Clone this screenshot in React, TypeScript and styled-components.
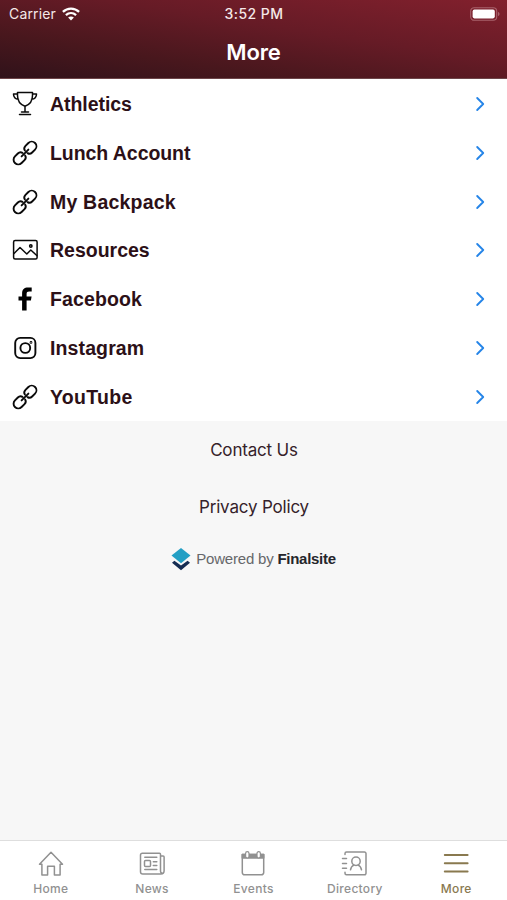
import React from "react";
import styled, { createGlobalStyle } from "styled-components";

const GlobalStyle = createGlobalStyle`
  * { box-sizing: border-box; }
  body { margin: 0; background: #f7f7f7; }
  svg { display: block; flex: none; }
`;

const Screen = styled.div`
  display: flex;
  flex-direction: column;
  width: 507px;
  height: 900px;
  background: #f7f7f7;
  font-family: Inter, sans-serif;
  overflow: hidden;
`;

const Header = styled.header`
  height: 79px;
  flex: none;
  background: linear-gradient(to top right, #30121a 0%, #48171d 28%, #661b26 60%, #82202d 100%);
  border-bottom: 1px solid #6d4549;
  color: #fff;
`;

const StatusBar = styled.div`
  display: grid;
  grid-template-columns: 1fr auto 1fr;
  align-items: center;
  height: 27px;
  padding: 0 7px 0 9px;
  color: #f5e8e8;
`;

const Carrier = styled.div`
  display: flex;
  align-items: center;
  gap: 6px;
  font-size: 14px;
  line-height: 27px;
  letter-spacing: 0.15px;
`;

const Clock = styled.div`
  font-size: 14px;
  font-weight: 500;
  letter-spacing: 0.45px;
  margin-left: -1px;
`;

const Battery = styled.div`
  justify-self: end;
`;

const Title = styled.h1`
  margin: 9px 0 0;
  font-size: 22px;
  line-height: 32px;
  font-weight: 600;
  letter-spacing: -0.1px;
  text-align: center;
`;

const Links = styled.nav`
  display: grid;
  grid-template-rows: repeat(7, 1fr);
  height: 342px;
  padding-top: 1px;
  flex: none;
  background: #fff;
`;

const LinkRow = styled.div`
  display: flex;
  align-items: center;
  padding: 0 20px 0 12px;
  color: #0a0a0a;
`;

const LinkLabel = styled.span<{ $track: number }>`
  flex: 1;
  margin-left: 12px;
  color: #2c1017;
  font: bold 19.5px/24px "Liberation Sans", Arial, sans-serif;
  letter-spacing: ${(p) => p.$track}px;
`;

const Body = styled.main`
  flex: 1;
  display: flex;
  flex-direction: column;
  align-items: center;
  padding-top: 1px;
`;

const FooterLink = styled.span`
  height: 57px;
  font-size: 17px;
  line-height: 57px;
  letter-spacing: -0.18px;
  padding-left: 1px;
  color: #35222a;
`;

const Powered = styled.div`
  display: flex;
  align-items: center;
  height: 24px;
  margin-top: 11px;
  gap: 5px;
  color: #66676a;
  font: 15px/24px "Liberation Sans", Arial, sans-serif;
  letter-spacing: -0.2px;
`;

const Brand = styled.b`
  color: #25262b;
  letter-spacing: -0.28px;
`;

const TabBar = styled.nav`
  display: grid;
  grid-template-columns: repeat(5, 1fr);
  height: 60px;
  flex: none;
  background: #fff;
  border-top: 1px solid #dedede;
`;

const Tab = styled.div<{ $active?: boolean }>`
  display: flex;
  flex-direction: column;
  align-items: center;
  padding-top: 9px;
  color: ${(p) => (p.$active ? "#89794f" : "#919191")};
`;

const TabLabel = styled.span`
  margin-top: 4px;
  font-size: 12px;
  line-height: 16px;
  font-weight: 500;
  letter-spacing: 0.3px;
`;

const line = { fill: "none", stroke: "currentColor", strokeLinecap: "round", strokeLinejoin: "round" } as const;

const Trophy = () => (
  <svg width="26" height="26" viewBox="0 0 26 26" {...line} strokeWidth="1.5">
    <path d="M5.500 1.500h15v3c0 6-3 9.200-7.500 10.700C8.500 13.700 5.500 10.500 5.500 4.500zM5.500 3h-4c0 3.500 1.500 5 5 5.300M20.500 3h4c0 3.500-1.500 5-5 5.300M13 15.500v5M9.500 21h7M7.500 23.500h11" />
  </svg>
);

const Chain = () => (
  <svg width="26" height="26" viewBox="0 0 26 26" {...line} strokeWidth="1.900">
    <g transform="rotate(-45 13 13)">
      <path d="M11.300 11.100C10.900 9.200 9.600 8.300 7.600 8.300H3.500a4.700 4.700 0 0 0 0 9.400h4.100c2 0 3.300-.9 3.700-2.800M14.700 11.100c.4-1.900 1.700-2.800 3.700-2.800h4.100a4.700 4.700 0 0 1 0 9.400h-4.100c-2 0-3.300-.9-3.700-2.800M8.200 13h9.600" />
    </g>
  </svg>
);

const Picture = () => (
  <svg width="26" height="26" viewBox="0 0 26 26" {...line} strokeWidth="1.500">
    <rect x="1.600" y="3.600" width="23.500" height="18.500" rx="1.500" />
    <path d="m2 16.500 6-6 6.800 6.500 4-4 6 5.500" />
    <circle cx="18.800" cy="9" r="1.200" />
  </svg>
);

const FacebookMark = () => (
  <svg width="26" height="26" viewBox="0 0 26 26" fill="#000">
    <path d="M10.100 24.500V14.500H6.500V10.500h3.600V7.400c0-4.200 2.200-6 6-6 1.200 0 2.400.1 3.600.2v3.900h-2.600c-1.700 0-2.500.8-2.500 2.200v2.800h5l-.7 4h-4.300v10z" />
  </svg>
);

const InstagramMark = () => (
  <svg width="26" height="26" viewBox="0 0 26 26" {...line} strokeWidth="1.900">
    <rect x="3.200" y="2.900" width="20.200" height="20.200" rx="5" />
    <circle cx="13.300" cy="13" r="4.900" />
    <circle cx="19" cy="7.400" r=".45" />
  </svg>
);

const Chevron = () => (
  <svg width="12" height="16" viewBox="0 0 12 16" {...line} strokeWidth="1.900" stroke="#2685e8">
    <path d="m2.200 2 6 6-6 6" />
  </svg>
);

const Wifi = () => (
  <svg width="18" height="14" viewBox="0 0 18 14" fill="none" stroke="#fff" strokeWidth="2.300">
    <path d="M.9 4.900C5.500.6 12.500.6 17.100 4.900M3.900 8.100c3-2.700 7.200-2.700 10.200 0" />
    <path d="m6.100 10.500 2.900 3 2.900-3c-1.700-1.500-4.100-1.500-5.800 0z" fill="#fff" stroke="none" />
  </svg>
);

const Layers = () => (
  <svg width="20" height="24" viewBox="0 0 20 24">
    <path d="m1 15.700 2.400-2L10 18.500l6.600-4.800 2.400 2-9 7.500z" fill="#152c52" />
    <path d="m10 1 9.500 7.500-9.500 7.800L.5 8.500z" fill="#239fc4" />
  </svg>
);

const HomeIcon = () => (
  <svg width="26" height="27" viewBox="0 0 26 27" {...line} strokeWidth="1.500">
    <path d="M1.500 14.300 13 2.200l11.500 12.100h-2.400V25h-5.700v-8.800H9.600V25H3.900V14.300z" />
  </svg>
);

const NewsIcon = () => (
  <svg width="26" height="27" viewBox="0 0 26 27" {...line} strokeWidth="1.500">
    <path d="M21.500 20.700V4.300a1 1 0 0 0-1-1H3.300a1.800 1.800 0 0 0-1.800 1.800v16.600A2.300 2.300 0 0 0 3.800 24h18a3.300 3.300 0 0 0 3.300-3.300V7a1 1 0 0 0-1-1h-2.600v14.700c0 1.300.4 2.300 1.500 2.300M5.800 7.300h12M5.800 19.600h12M14.300 11.700h3.500M14.300 15.500h3.500" />
    <rect x="5.500" y="10.500" width="6" height="6" rx="1" />
  </svg>
);

const EventsIcon = () => (
  <svg width="26" height="27" viewBox="0 0 26 27" {...line} strokeWidth="1.500">
    <path d="M2.300 4.500h21.400v18a2.300 2.300 0 0 1-2.300 2.300H4.600a2.300 2.300 0 0 1-2.300-2.300z" />
    <path d="M2.300 4.500h21.400V8H2.300z" fill="currentColor" />
    <rect x="5.600" y="1.700" width="3.400" height="6.300" rx="1.700" fill="#fff" strokeWidth="1.200" />
    <rect x="17" y="1.700" width="3.400" height="6.300" rx="1.700" fill="#fff" strokeWidth="1.200" />
  </svg>
);

const DirectoryIcon = () => (
  <svg width="27" height="27" viewBox="0 0 27 27" {...line} strokeWidth="1.500">
    <path d="M4 4.500V3.500A1.500 1.500 0 0 1 5.500 2h18A1.500 1.500 0 0 1 25 3.500v19.800a1.500 1.500 0 0 1-1.500 1.500h-18A1.500 1.500 0 0 1 4 23.300v-1M1.500 8.500h4M1.500 13.400h4M1.500 18.300h4M9.500 19.800c.4-2.500 1.600-3.900 3.400-4.700M20.500 19.800c-.4-2.500-1.600-3.900-3.400-4.700" />
    <circle cx="15" cy="11.300" r="4.200" />
  </svg>
);

const MenuIcon = () => (
  <svg width="26" height="27" viewBox="0 0 26 27" {...line} strokeWidth="2">
    <path d="M1.800 5h22.800M1.800 13.300h22.800M1.800 21.600h22.800" />
  </svg>
);

const links = [
  { label: "Athletics", Icon: Trophy, track: -0.05 },
  { label: "Lunch Account", Icon: Chain, track: -0.06 },
  { label: "My Backpack", Icon: Chain, track: 0.2 },
  { label: "Resources", Icon: Picture, track: 0 },
  { label: "Facebook", Icon: FacebookMark, track: 0.12 },
  { label: "Instagram", Icon: InstagramMark, track: 0.12 },
  { label: "YouTube", Icon: Chain, track: 0.3 },
];

const tabs = [
  { label: "Home", Icon: HomeIcon },
  { label: "News", Icon: NewsIcon },
  { label: "Events", Icon: EventsIcon },
  { label: "Directory", Icon: DirectoryIcon },
  { label: "More", Icon: MenuIcon, active: true },
];

export default function App() {
  return (
    <>
      <GlobalStyle />
      <Screen>
        <Header>
          <StatusBar>
            <Carrier>Carrier <Wifi /></Carrier>
            <Clock>3:52 PM</Clock>
            <Battery>
              <svg width="30" height="14" viewBox="0 0 30 14">
                <rect x=".7" y=".7" width="26" height="12.600" rx="3.500" fill="none" stroke="#a8626b" strokeWidth="1.100" />
                <rect x="2.600" y="2.600" width="22.200" height="8.800" rx="1.800" fill="#fff" />
                <path d="M28 5c2 .5 2 3.500 0 4z" fill="#a8626b" />
              </svg>
            </Battery>
          </StatusBar>
          <Title>More</Title>
        </Header>
        <Links>
          {links.map(({ label, Icon, track }) => (
            <LinkRow key={label}>
              <Icon />
              <LinkLabel $track={track}>{label}</LinkLabel>
              <Chevron />
            </LinkRow>
          ))}
        </Links>
        <Body>
          <FooterLink>Contact Us</FooterLink>
          <FooterLink>Privacy Policy</FooterLink>
          <Powered>
            <Layers />
            <span>Powered by <Brand>Finalsite</Brand></span>
          </Powered>
        </Body>
        <TabBar>
          {tabs.map(({ label, Icon, active }) => (
            <Tab key={label} $active={active}>
              <Icon />
              <TabLabel>{label}</TabLabel>
            </Tab>
          ))}
        </TabBar>
      </Screen>
    </>
  );
}
